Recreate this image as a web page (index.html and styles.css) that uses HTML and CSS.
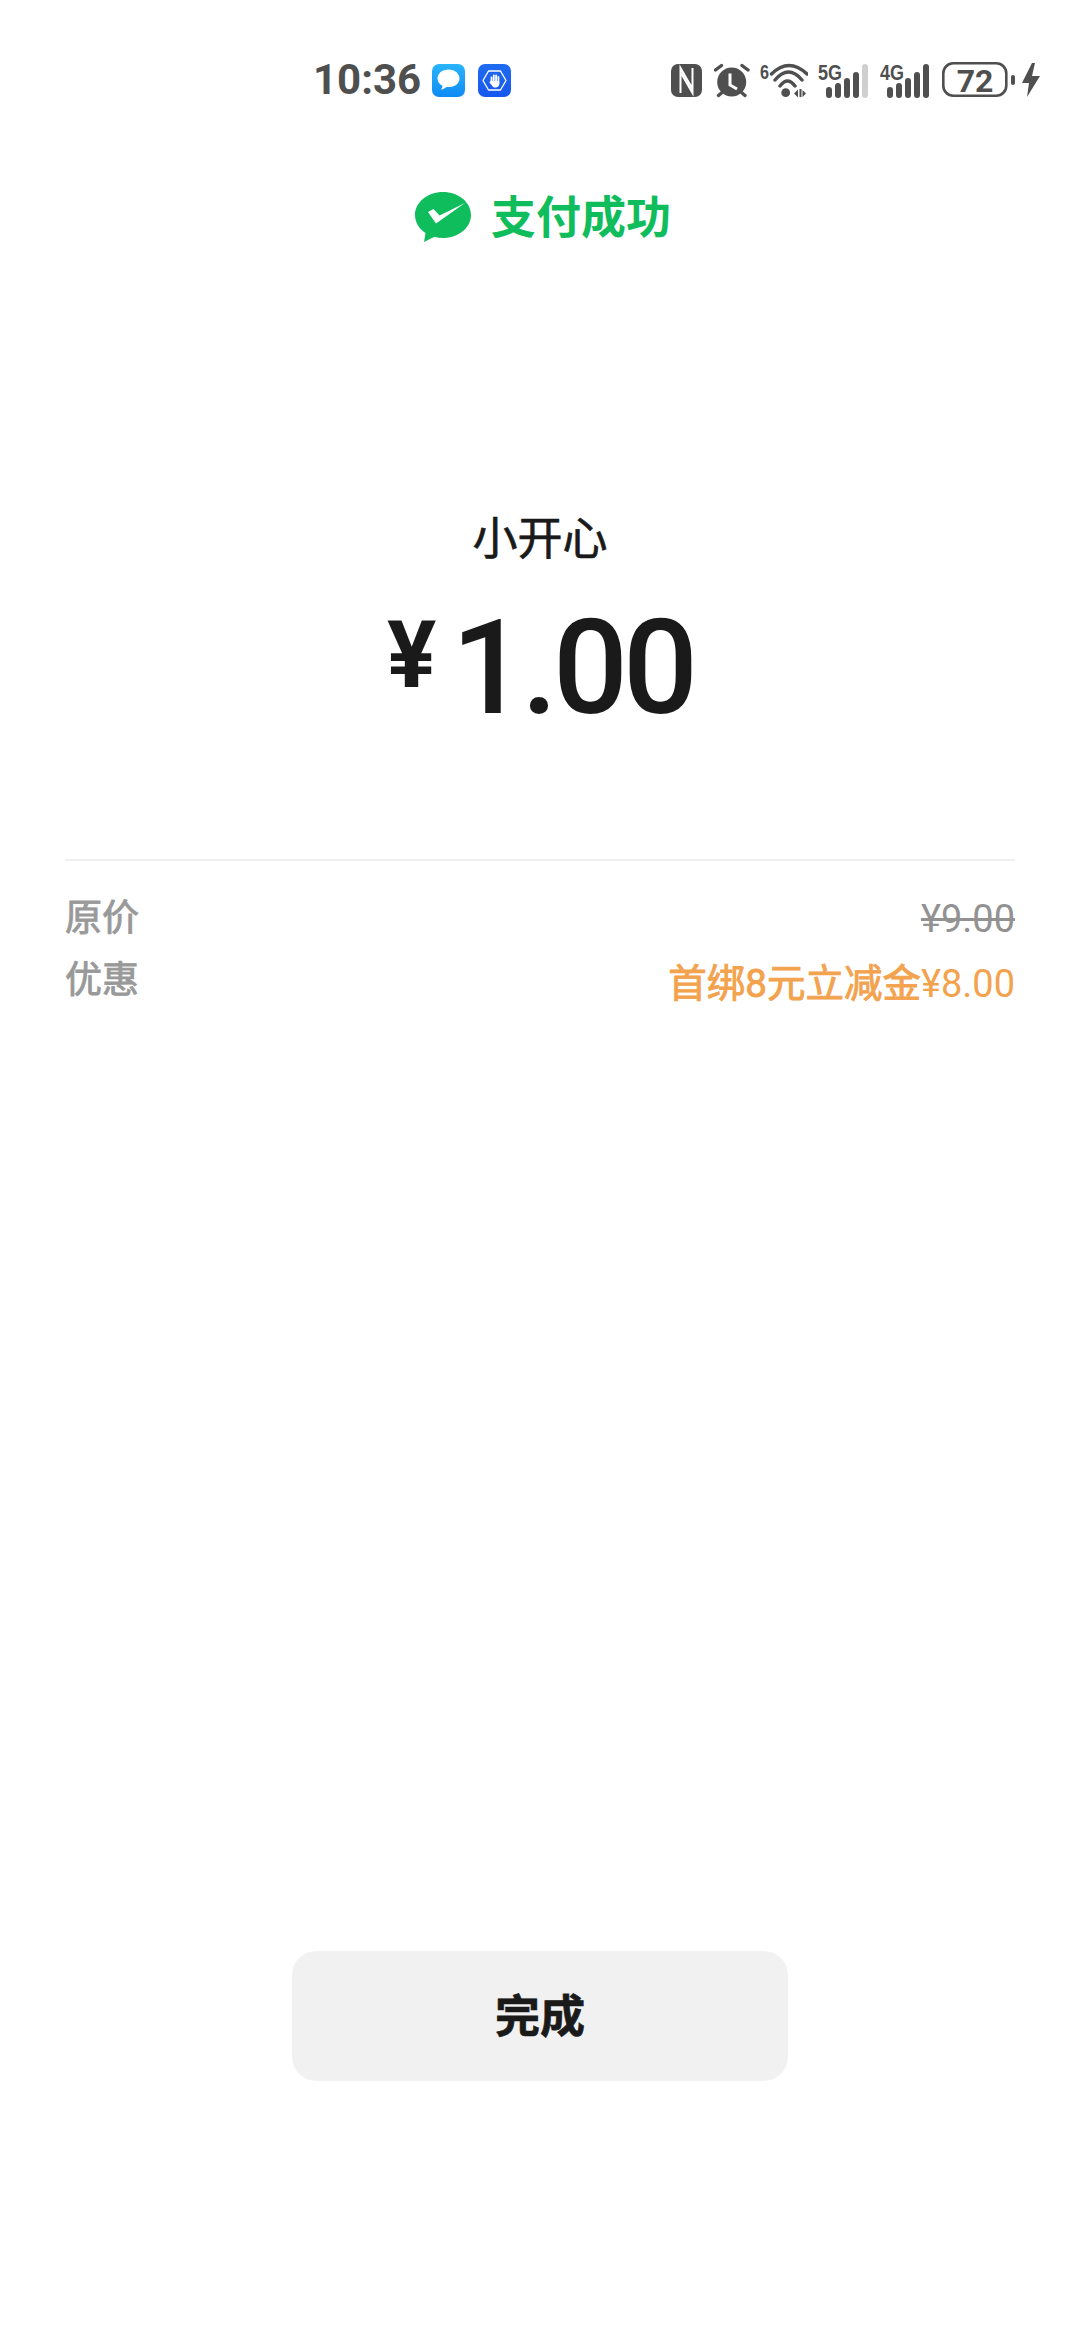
FILE: index.html
```html
<!DOCTYPE html>
<html lang="zh">

<head>
    <title>支付成功</title>
    <link rel="stylesheet" href="styles.css">
</head>

<body>
    <div class="status-bar">
        <div class="status-left">
            <span class="status-time">10:36</span>
            <svg class="app-icon" width="33" height="33" viewBox="0 0 33 33">
                <defs>
                    <linearGradient id="msgBg" x1="0" y1="0" x2="0" y2="1">
                        <stop offset="0" stop-color="#29b4fb"/>
                        <stop offset="1" stop-color="#0f8bf5"/>
                    </linearGradient>
                </defs>
                <rect width="33" height="33" rx="7" fill="url(#msgBg)"/>
                <path d="M16.500 5.500c-6.200 0-11 3.900-11 8.900 0 3.200 2 5.900 5 7.400-.1 1.300-.6 2.500-1.400 3.700 2.200-.3 4.100-1.300 5.500-2.500h1.900c6.200 0 11-3.600 11-8.600s-4.800-8.900-11-8.900z" fill="#fff"/>
            </svg>
            <svg class="app-icon shield" width="33" height="33" viewBox="0 0 33 33">
                <defs>
                    <linearGradient id="handBg" x1="0" y1="0" x2="0" y2="1">
                        <stop offset="0" stop-color="#1f6cf0"/>
                        <stop offset="1" stop-color="#1557ee"/>
                    </linearGradient>
                </defs>
                <rect width="33" height="33" rx="7" fill="url(#handBg)"/>
                <path d="M10.500 7h12l5.500 9.500-5.500 9.500h-12L5 16.500z" fill="none" stroke="#fff" stroke-width="1.300" stroke-linejoin="round"/>
                <path d="M13.500 13.500v5M15.800 11.500v6M18.100 11.500v6M20.400 12.800v7" fill="none" stroke="#fff" stroke-width="1.800" stroke-linecap="round"/>
                <path d="M12.700 16.800l8.600.8v2.400c0 2-1.500 3.500-3.800 3.500-1.900 0-3-.9-3.800-2.300l-2.300-3z" fill="#fff"/>
            </svg>
        </div>
        <div class="status-right">
            <svg width="33" height="48" viewBox="0 -8 33 48">
                <rect x="0" y="0" width="31" height="33" rx="7" fill="#4f4f4f"/>
                <path d="M9.500 29V4l11.500 20M21.500 4v25L10 9" fill="none" stroke="#fff" stroke-width="2"/>
            </svg>
            <svg width="36" height="48" viewBox="0 -8 36 48">
                <circle cx="17.700" cy="18" r="14.500" fill="#4f4f4f"/>
                <path d="M16 9.500V21l7 4" fill="none" stroke="#fff" stroke-width="3"/>
                <path d="M1.500 6l6-4.500M34 6l-6-4.500M4.500 31.500l3.500-3M31 31.500l-3.500-3" stroke="#4f4f4f" stroke-width="3.400" stroke-linecap="round"/>
            </svg>
            <svg width="48" height="48" viewBox="0 -8 48 48">
                <text class="icon-text small" x="0" y="15" textLength="9" lengthAdjust="spacingAndGlyphs">6</text>
                <path d="M11.500 10Q29-7 47 10M15 16Q28.500 0 42 16M20 22Q27.500 12 35 22" fill="none" stroke="#4f4f4f" stroke-width="3.400" stroke-linecap="round"/>
                <circle cx="25.700" cy="28.700" r="4.400" fill="#4f4f4f"/>
                <path d="M34 29.500l4-4v8zM39.500 25h2v8h-2zM42.500 26l3.500 3.500-3.500 3.500z" fill="#4f4f4f"/>
            </svg>
            <svg width="52" height="48" viewBox="0 -8 52 48">
                <text class="icon-text" x="0" y="16" textLength="24" lengthAdjust="spacingAndGlyphs">5G</text>
                <rect x="8" y="23" width="6" height="11" rx="3" fill="#4f4f4f"/>
                <rect x="17" y="19" width="6" height="15" rx="3" fill="#4f4f4f"/>
                <rect x="26" y="14" width="6" height="20" rx="3" fill="#4f4f4f"/>
                <rect x="35" y="8" width="6" height="26" rx="3" fill="#4f4f4f"/>
                <rect x="44" y="0" width="6" height="34" rx="3" fill="#cfcfcf"/>
            </svg>
            <svg width="52" height="48" viewBox="0 -8 52 48">
                <text class="icon-text" x="0" y="16" textLength="24" lengthAdjust="spacingAndGlyphs">4G</text>
                <rect x="7" y="23" width="6" height="11" rx="3" fill="#4f4f4f"/>
                <rect x="16" y="19" width="6" height="15" rx="3" fill="#4f4f4f"/>
                <rect x="25" y="14" width="6" height="20" rx="3" fill="#4f4f4f"/>
                <rect x="34" y="8" width="6" height="26" rx="3" fill="#4f4f4f"/>
                <rect x="43" y="0" width="6" height="34" rx="3" fill="#4f4f4f"/>
            </svg>
            <svg width="98" height="48" viewBox="0 -6 98 48">
                <rect x="1.300" y="1.300" width="63" height="32.400" rx="10" fill="none" stroke="#4f4f4f" stroke-width="2.600"/>
                <text class="battery-text" x="33" y="30" text-anchor="middle">72</text>
                <rect x="69" y="13" width="4" height="10" rx="2" fill="#4f4f4f"/>
                <path d="M90 1L80 21h7l-2 14 13-21h-8l3-13z" fill="#4f4f4f"/>
            </svg>
        </div>
    </div>

    <div class="pay-head">
        <svg width="56" height="50" viewBox="0 0 56 50">
            <path d="M28 0C12.500 0 0 10.300 0 23c0 7.300 4.100 13.800 10.500 18L9 50l10.500-5.200c2.700.8 5.500 1.200 8.500 1.200 15.500 0 28-10.300 28-23S43.500 0 28 0z" fill="#10bd5c"/>
            <path d="M13 20l5.500-3 6 6.500L50 11 21 31.500z" fill="#fff"/>
        </svg>
        <span class="pay-title">支付成功</span>
    </div>

    <div class="merchant">小开心</div>
    <div class="amount">
        <span class="amount-sign">¥</span>
        <span class="amount-num">1.00</span>
    </div>

    <div class="details">
        <div class="detail-row">
            <span class="detail-label">原价</span>
            <span class="price-old">¥9.00</span>
        </div>
        <div class="detail-row">
            <span class="detail-label">优惠</span>
            <span class="price-off"><b>首绑8元立减金</b>¥8.00</span>
        </div>
    </div>

    <button class="done-btn" type="button">完成</button>
</body>

</html>
```

FILE: styles.css
```css
body {
    font-family: Roboto, "Noto Sans CJK SC", sans-serif;
    margin: 0;
    height: 100vh;
    background-color: #fff;
    color: #1a1a1a;
    display: flex;
    flex-direction: column;
    align-items: center;
    overflow: hidden;
}

.status-bar {
    box-sizing: border-box;
    width: 100%;
    height: 104px;
    padding: 56px 40px 0 313px;
    display: flex;
    justify-content: space-between;
    align-items: flex-start;
}

.status-left {
    display: flex;
    align-items: center;
    height: 48px;
}

.status-time {
    font-size: 42px;
    font-weight: 700;
    line-height: 48px;
    color: #4f4f4f;
}

.app-icon {
    margin-left: 11px;
}

.app-icon.shield {
    margin-left: 13px;
}

.status-right {
    display: flex;
    align-items: flex-start;
    gap: 10px;
}

.icon-text {
    font-family: "Liberation Sans", sans-serif;
    font-size: 22px;
    font-weight: 700;
    fill: #4f4f4f;
}

.icon-text.small {
    font-size: 21px;
}

.battery-text {
    font-family: Roboto, sans-serif;
    font-size: 32px;
    font-weight: 700;
    fill: #4f4f4f;
}

.pay-head {
    margin-top: 88px;
    margin-left: 6px;
    display: flex;
    align-items: center;
    gap: 20px;
    height: 50px;
}

.pay-title {
    font-size: 45px;
    font-weight: 700;
    color: #10bd5c;
    padding-bottom: 5px;
}

.merchant {
    margin-top: 272px;
    font-size: 45px;
    line-height: 52px;
    -webkit-text-stroke: 0.7px #1a1a1a;
}

.amount {
    margin-top: 27px;
    display: flex;
    align-items: flex-start;
    gap: 15px;
    height: 150px;
}

.amount-sign {
    font-size: 92px;
    font-weight: 700;
    line-height: 126px;
}

.amount-num {
    font-size: 132px;
    font-weight: 500;
    line-height: 150px;
    letter-spacing: -5px;
}

.details {
    box-sizing: border-box;
    width: 950px;
    margin-top: 116px;
    padding-top: 23px;
    border-top: 2px solid #f0f0f0;
}

.detail-row {
    display: flex;
    justify-content: space-between;
    align-items: center;
    height: 62px;
}

.detail-label {
    font-size: 37px;
    color: #999;
    -webkit-text-stroke: 0.9px #999;
}

.price-old {
    font-size: 38px;
    padding-top: 8px;
    color: #929292;
    text-decoration: line-through;
}

.price-off {
    font-size: 38px;
    padding-top: 6px;
    color: #f3a24e;
}

.price-off b {
    font-size: 38.5px;
    font-weight: 400;
    -webkit-text-stroke: 0.9px #f3a24e;
}

.done-btn {
    margin-top: auto;
    margin-bottom: 259px;
    padding: 0 0 5px;
    width: 496px;
    height: 130px;
    border: none;
    border-radius: 24px;
    background-color: #f1f1f1;
    color: #1a1a1a;
    font-family: inherit;
    font-size: 45px;
    font-weight: 700;
    -webkit-text-stroke: 0.7px #1a1a1a;
}
```
